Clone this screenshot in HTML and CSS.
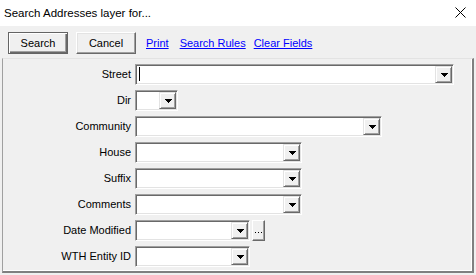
FILE: index.html
```html
<!DOCTYPE html>
<html>
<head>
<meta charset="utf-8">
<link rel="stylesheet" href="styles.css">
</head>
<body>
<div class="window">
  <div class="titlebar">
    <span class="title">Search Addresses layer for...</span>
    <svg class="close" width="11" height="11" viewBox="0 0 11 11"><path d="M0.5 0.5 L10.5 10.5 M10.5 0.5 L0.5 10.5" stroke="#000" stroke-width="1"/></svg>
  </div>
  <div class="toolbar">
    <button class="btn default">Search</button>
    <button class="btn">Cancel</button>
    <a class="link link-print" href="#">Print</a>
    <a class="link link-rules" href="#">Search Rules</a>
    <a class="link" href="#">Clear Fields</a>
  </div>
  <div class="panel">
    <div class="form">
      <label class="lbl">Street</label>
      <div class="field"><div class="combo w-street"><span class="caret"></span><span class="drop"><svg width="7" height="4" viewBox="0 0 7 4" shape-rendering="crispEdges"><rect x="0" y="0" width="7" height="1"/><rect x="1" y="1" width="5" height="1"/><rect x="2" y="2" width="3" height="1"/><rect x="3" y="3" width="1" height="1"/></svg></span></div></div>

      <label class="lbl">Dir</label>
      <div class="field"><div class="combo w-dir"><span class="drop"><svg width="7" height="4" viewBox="0 0 7 4" shape-rendering="crispEdges"><rect x="0" y="0" width="7" height="1"/><rect x="1" y="1" width="5" height="1"/><rect x="2" y="2" width="3" height="1"/><rect x="3" y="3" width="1" height="1"/></svg></span></div></div>

      <label class="lbl">Community</label>
      <div class="field"><div class="combo w-community"><span class="drop"><svg width="7" height="4" viewBox="0 0 7 4" shape-rendering="crispEdges"><rect x="0" y="0" width="7" height="1"/><rect x="1" y="1" width="5" height="1"/><rect x="2" y="2" width="3" height="1"/><rect x="3" y="3" width="1" height="1"/></svg></span></div></div>

      <label class="lbl">House</label>
      <div class="field"><div class="combo w-mid"><span class="drop"><svg width="7" height="4" viewBox="0 0 7 4" shape-rendering="crispEdges"><rect x="0" y="0" width="7" height="1"/><rect x="1" y="1" width="5" height="1"/><rect x="2" y="2" width="3" height="1"/><rect x="3" y="3" width="1" height="1"/></svg></span></div></div>

      <label class="lbl">Suffix</label>
      <div class="field"><div class="combo w-mid"><span class="drop"><svg width="7" height="4" viewBox="0 0 7 4" shape-rendering="crispEdges"><rect x="0" y="0" width="7" height="1"/><rect x="1" y="1" width="5" height="1"/><rect x="2" y="2" width="3" height="1"/><rect x="3" y="3" width="1" height="1"/></svg></span></div></div>

      <label class="lbl">Comments</label>
      <div class="field"><div class="combo w-mid"><span class="drop"><svg width="7" height="4" viewBox="0 0 7 4" shape-rendering="crispEdges"><rect x="0" y="0" width="7" height="1"/><rect x="1" y="1" width="5" height="1"/><rect x="2" y="2" width="3" height="1"/><rect x="3" y="3" width="1" height="1"/></svg></span></div></div>

      <label class="lbl">Date Modified</label>
      <div class="field"><div class="combo w-short"><span class="drop"><svg width="7" height="4" viewBox="0 0 7 4" shape-rendering="crispEdges"><rect x="0" y="0" width="7" height="1"/><rect x="1" y="1" width="5" height="1"/><rect x="2" y="2" width="3" height="1"/><rect x="3" y="3" width="1" height="1"/></svg></span></div><span class="ellipsis"><svg width="7" height="1" viewBox="0 0 7 1" shape-rendering="crispEdges"><rect x="0" y="0" width="1" height="1"/><rect x="3" y="0" width="1" height="1"/><rect x="6" y="0" width="1" height="1"/></svg></span></div>

      <label class="lbl">WTH Entity ID</label>
      <div class="field"><div class="combo w-short"><span class="drop"><svg width="7" height="4" viewBox="0 0 7 4" shape-rendering="crispEdges"><rect x="0" y="0" width="7" height="1"/><rect x="1" y="1" width="5" height="1"/><rect x="2" y="2" width="3" height="1"/><rect x="3" y="3" width="1" height="1"/></svg></span></div></div>
    </div>
  </div>
</div>
</body>
</html>
```

FILE: styles.css
```css
html, body {
  margin: 0;
  padding: 0;
  background: #f0f0f0;
}
.window {
  width: 476px;
  height: 275px;
  overflow: hidden;
  background: #f0f0f0;
  font-family: "Liberation Sans", Arial, sans-serif;
  font-size: 11px;
  color: #000;
}
.titlebar {
  height: 26px;
  background: #fff;
  display: flex;
  align-items: center;
  justify-content: space-between;
  padding: 0 10px 0 4px;
  box-sizing: border-box;
}
.title {
  font-size: 11.5px;
  font-family: "Liberation Sans", Arial, sans-serif;
  padding-bottom: 1px;
}
.close {
  display: block;
  margin-bottom: 1px;
}
.toolbar {
  height: 32px;
  box-sizing: border-box;
  padding: 6px 0 0 8px;
  display: flex;
  align-items: flex-start;
}
.btn {
  width: 60px;
  height: 22px;
  margin: 0 8px 0 0;
  padding: 0;
  box-sizing: border-box;
  background: #f0f0f0;
  font-family: "Liberation Sans", Arial, sans-serif;
  font-size: 11px;
  color: #000;
  border: 1px solid;
  border-color: #fff #696969 #696969 #fff;
  box-shadow: inset -1px -1px 0 #a0a0a0, inset 1px 1px 0 #e3e3e3;
}
.btn.default {
  border: 1px solid #646464;
  box-shadow: inset 1px 1px 0 #fff, inset -1px -1px 0 #696969, inset -2px -2px 0 #a0a0a0;
}
.link {
  color: #0000ff;
  text-decoration: underline;
  font-size: 11px;
  line-height: 22px;
  margin-right: 8px;
}
.link-print { margin-left: 2px; margin-right: 11px; }
.panel {
  margin: 0 2px 0 2px;
  height: 215px;
  box-sizing: border-box;
  border-top: 1px solid #e3e3e3;
  border-left: 1px solid #a0a0a0;
  border-right: 2px solid #808080;
  border-bottom: 2px solid #808080;
  box-shadow: inset -1px -1px 0 #fff;
}
.form {
  display: grid;
  grid-template-columns: 128px auto;
  column-gap: 4px;
  row-gap: 5px;
  padding-top: 5px;
}
.lbl {
  text-align: right;
  line-height: 21px;
  height: 21px;
  white-space: nowrap;
}
.field {
  display: flex;
  gap: 2px;
  height: 21px;
}
.combo {
  position: relative;
  height: 21px;
  box-sizing: border-box;
  background: #fff;
  border: 1px solid;
  border-color: #a0a0a0 #fff #fff #a0a0a0;
  box-shadow: inset 1px 1px 0 #696969, inset -1px -1px 0 #e3e3e3;
  display: flex;
  justify-content: flex-end;
  padding: 1px;
}
.w-street { width: 319px; }
.w-dir { width: 43px; }
.w-community { width: 247px; }
.w-mid { width: 167px; }
.w-short { width: 115px; }
.caret {
  position: absolute;
  left: 3px;
  top: 2px;
  width: 1px;
  height: 14px;
  background: #000;
}
.drop {
  width: 17px;
  height: 17px;
  box-sizing: border-box;
  background: #f0f0f0;
  border: 1px solid;
  border-color: #e3e3e3 #696969 #696969 #e3e3e3;
  box-shadow: inset 1px 1px 0 #fff, inset -1px -1px 0 #a0a0a0;
  display: flex;
  align-items: center;
  justify-content: center;
}
.drop svg { display: block; fill: #000; margin-left: 1px; }
.ellipsis {
  width: 13px;
  height: 21px;
  box-sizing: border-box;
  background: #f0f0f0;
  border: 1px solid;
  border-color: #fff #696969 #696969 #fff;
  box-shadow: inset -1px -1px 0 #a0a0a0;
  display: flex;
  justify-content: center;
  align-items: flex-end;
  padding-bottom: 7px;
}
.ellipsis svg { display: block; fill: #000; }
```
